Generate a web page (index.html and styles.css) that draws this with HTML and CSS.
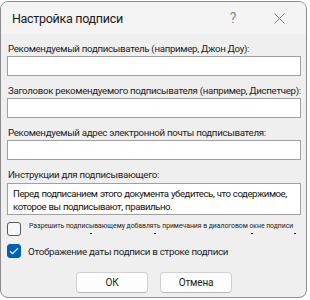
FILE: index.html
```html
<!DOCTYPE html>
<html>
<head>
    <link rel="stylesheet" href="styles.css">
</head>
<body>
    <div class="dialog">
        <div class="title-bar">
            <span class="title">Настройка подписи</span>
            <div class="title-controls">
                <span class="help-btn">?</span>
                <span class="close-btn">
                    <svg width="11" height="11" viewBox="0 0 11 11">
                        <path d="M0.5 0.5 L10.5 10.5 M10.5 0.5 L0.5 10.5" stroke="#808080" stroke-width="1" fill="none"/>
                    </svg>
                </span>
            </div>
        </div>
        <div class="dialog-body">
            <div class="field">
                <label>Рекомендуемый подписыватель (например, Джон Доу):</label>
                <div class="text-input"></div>
            </div>
            <div class="field">
                <label>Заголовок рекомендуемого подписывателя (например, Диспетчер):</label>
                <div class="text-input"></div>
            </div>
            <div class="field">
                <label>Рекомендуемый адрес электронной почты подписывателя:</label>
                <div class="text-input"></div>
            </div>
            <div class="field">
                <label>Инструкции для подписывающего:</label>
                <div class="text-area">Перед подписанием этого документа убедитесь, что содержимое, которое вы подписывают, правильно.</div>
            </div>
            <div class="check-row small">
                <span class="checkbox"></span>
                <div class="small-label">
                    <div>Разрешить подписывающему добавлять примечания в диалоговом окне подписи</div>
                    <div class="marks"><i class="m1"></i><i class="m2"></i><i class="m3"></i><i class="m4"></i></div>
                </div>
            </div>
            <div class="check-row">
                <span class="checkbox checked">
                    <svg width="10" height="8" viewBox="0 0 10 8">
                        <path d="M1 4.2 L3.6 6.6 L9 1.2" stroke="#fff" stroke-width="1.2" fill="none"/>
                    </svg>
                </span>
                <span class="check-label">Отображение даты подписи в строке подписи</span>
            </div>
            <div class="buttons">
                <button>ОК</button>
                <button>Отмена</button>
            </div>
        </div>
    </div>
</body>
</html>
```
FILE: styles.css
```css
body {
    margin: 0;
    background: #ffffff;
    font-family: Roboto, 'Liberation Sans', sans-serif;
    color: #1b1b1b;
}

.dialog {
    box-sizing: border-box;
    margin: 1px 0 0 0;
    width: 307px;
    height: 297px;
    border: 1px solid #8c8c8c;
    border-radius: 8px;
    background: #efefef;
    overflow: hidden;
}

.title-bar {
    height: 32px;
    background: #f4f4f4;
    display: flex;
    align-items: center;
    justify-content: space-between;
    padding-left: 11px;
}

.title {
    font-size: 12.5px;
    letter-spacing: -0.3px;
    color: #1a1a1a;
    margin-top: 1px;
}

.title-controls {
    display: flex;
    align-items: center;
}

.help-btn {
    font-size: 14px;
    color: #8a8a8a;
    width: 46px;
    text-align: center;
}

.close-btn {
    width: 46px;
    display: flex;
    justify-content: center;
    padding-right: 4px;
}

.dialog-body {
    padding: 8px 5px 0 6px;
}

.field {
    display: flex;
    flex-direction: column;
    margin-bottom: 8px;
}

.field label {
    font-size: 9.7px;
    letter-spacing: -0.3px;
    line-height: 14px;
    padding-left: 1px;
    white-space: nowrap;
}

.text-input {
    box-sizing: border-box;
    height: 20px;
    background: #ffffff;
    border: 1px solid #a0a0a0;
}

.text-area {
    box-sizing: border-box;
    height: 32px;
    margin-top: 1px;
    background: #ffffff;
    border: 1px solid #a0a0a0;
    padding: 3px 2px 0 5px;
    font-size: 9.6px;
    letter-spacing: -0.45px;
    word-spacing: 0.5px;
    line-height: 13px;
    color: #111;
}

.check-row {
    display: flex;
    align-items: center;
    gap: 7px;
}

.check-row.small {
    align-items: flex-start;
    margin-top: -1px;
    height: 22px;
}

.checkbox {
    box-sizing: border-box;
    width: 14px;
    height: 14px;
    border: 1px solid #5a5a5a;
    border-radius: 3px;
    background: #f7f7f7;
    display: flex;
    align-items: center;
    justify-content: center;
    flex: none;
}

.checkbox.checked {
    background: #005fb8;
    border-color: #005fb8;
}

.small-label {
    font-size: 6.8px;
    line-height: 9px;
    color: #222;
    white-space: nowrap;
    padding-left: 1px;
}

.marks {
    position: relative;
    height: 6px;
}

.marks i {
    position: absolute;
    top: 2px;
    width: 2px;
    height: 1px;
    background: #222;
}

.marks .m1 { left: 61px; }
.marks .m2 { left: 125px; }
.marks .m3 { left: 222px; }
.marks .m4 { left: 265px; }

.check-row .check-label {
    font-size: 9.8px;
    letter-spacing: -0.3px;
    white-space: nowrap;
}

.buttons {
    display: flex;
    justify-content: center;
    gap: 12px;
    margin-top: 14px;
}

.buttons button {
    width: 72px;
    height: 21px;
    background: #fdfdfd;
    border: 1px solid #d0d0d0;
    border-bottom-color: #b8b8b8;
    border-radius: 4px;
    font-family: Roboto, 'Liberation Sans', sans-serif;
    font-size: 10px;
    letter-spacing: -0.2px;
    color: #1b1b1b;
    padding: 0;
}
```
